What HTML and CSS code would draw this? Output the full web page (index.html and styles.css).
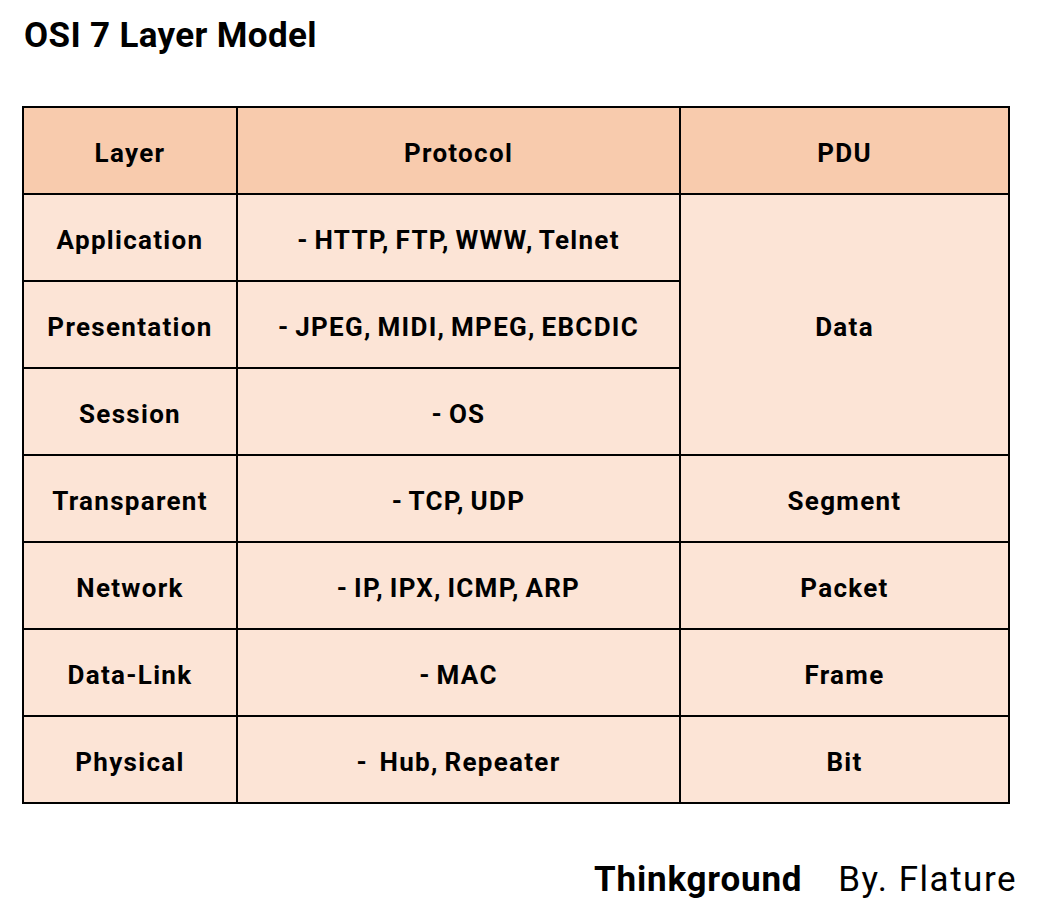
FILE: index.html
```html
<!DOCTYPE html>
<html>
<head>
<meta charset="utf-8">
<link rel="stylesheet" href="styles.css">
</head>
<body>
<h1 class="title">OSI 7 Layer Model</h1>
<table class="osi">
  <colgroup>
    <col class="c1"><col class="c2"><col class="c3">
  </colgroup>
  <thead>
    <tr><th>Layer</th><th>Protocol</th><th>PDU</th></tr>
  </thead>
  <tbody>
    <tr><td>Application</td><td>- HTTP, FTP, WWW, Telnet</td><td rowspan="3">Data</td></tr>
    <tr><td>Presentation</td><td>- JPEG, MIDI, MPEG, EBCDIC</td></tr>
    <tr><td>Session</td><td>- OS</td></tr>
    <tr><td>Transparent</td><td>- TCP, UDP</td><td>Segment</td></tr>
    <tr><td>Network</td><td>- IP, IPX, ICMP, ARP</td><td>Packet</td></tr>
    <tr><td>Data-Link</td><td>- MAC</td><td>Frame</td></tr>
    <tr><td>Physical</td><td>-&nbsp; Hub, Repeater</td><td>Bit</td></tr>
  </tbody>
</table>
<div class="footer"><span class="brand">Thinkground</span><span class="by">By. Flature</span></div>
</body>
</html>
```
FILE: styles.css
```css
html, body { margin: 0; padding: 0; background: #fff; }
body {
  width: 1039px;
  height: 922px;
  font-family: Roboto, "Liberation Sans", sans-serif;
  color: #000;
}
.title {
  margin: 0;
  padding: 14px 0 0 24px;
  font-size: 35px;
  font-weight: 700;
  line-height: 44px;
  letter-spacing: 0.35px;
}
.osi {
  margin: 48px 0 0 22px;
  border-collapse: collapse;
  table-layout: fixed;
  width: 986px;
}
.c1 { width: 214px; }
.c2 { width: 443px; }
.c3 { width: 329px; }
.osi th, .osi td {
  border: 2px solid #000;
  height: 81px;
  padding: 4px 0 0 0;
  text-align: center;
  vertical-align: middle;
  font-size: 26px;
  font-weight: 700;
  letter-spacing: 1.3px;
  word-spacing: -2px;
  background: #FCE4D6;
}
.osi th { background: #F8CBAD; }
.footer {
  display: flex;
  justify-content: flex-end;
  gap: 36px;
  padding: 54px 22px 0 0;
  font-size: 35px;
  line-height: 44px;
}
.brand { font-weight: 700; letter-spacing: 0.8px; }
.by { font-weight: 400; letter-spacing: 1.5px; }
```
